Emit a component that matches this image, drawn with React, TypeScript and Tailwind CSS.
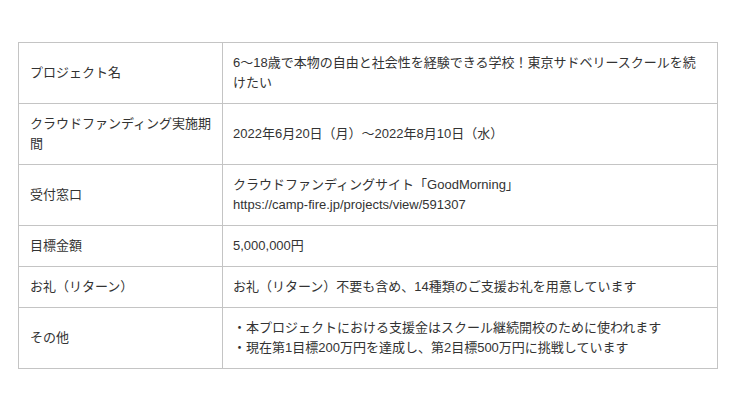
const rows: { label: string; value: string[] }[] = [
  {
    label: "プロジェクト名",
    value: [
      "6〜18歳で本物の自由と社会性を経験できる学校！東京サドベリースクールを続けたい",
    ],
  },
  {
    label: "クラウドファンディング実施期間",
    value: ["2022年6月20日（月）〜2022年8月10日（水）"],
  },
  {
    label: "受付窓口",
    value: [
      "クラウドファンディングサイト「GoodMorning」",
      "https://camp-fire.jp/projects/view/591307",
    ],
  },
  { label: "目標金額", value: ["5,000,000円"] },
  {
    label: "お礼（リターン）",
    value: ["お礼（リターン）不要も含め、14種類のご支援お礼を用意しています"],
  },
  {
    label: "その他",
    value: [
      "・本プロジェクトにおける支援金はスクール継続開校のために使われます",
      "・現在第1目標200万円を達成し、第2目標500万円に挑戦しています",
    ],
  },
];

export default function App() {
  return (
    <div
      className="w-[740px] h-[409px] bg-white pt-[42px] pl-[18px] text-[#333] text-[13px] leading-[20px]"
      style={{ fontFamily: '"Liberation Sans", "Noto Sans CJK JP", sans-serif' }}
    >
      <table className="w-[700px] border-collapse table-fixed">
        <tbody>
          {rows.map((row, i) => (
            <tr key={i}>
              <td className="w-[204px] border border-[#c4c4c4] pl-[11px] pr-[6px] py-[10px] align-middle">
                {row.label}
              </td>
              <td className="border border-[#c4c4c4] px-[10px] py-[10px] align-middle">
                {row.value.map((line, j) => (
                  <div key={j}>{line}</div>
                ))}
              </td>
            </tr>
          ))}
        </tbody>
      </table>
    </div>
  );
}
